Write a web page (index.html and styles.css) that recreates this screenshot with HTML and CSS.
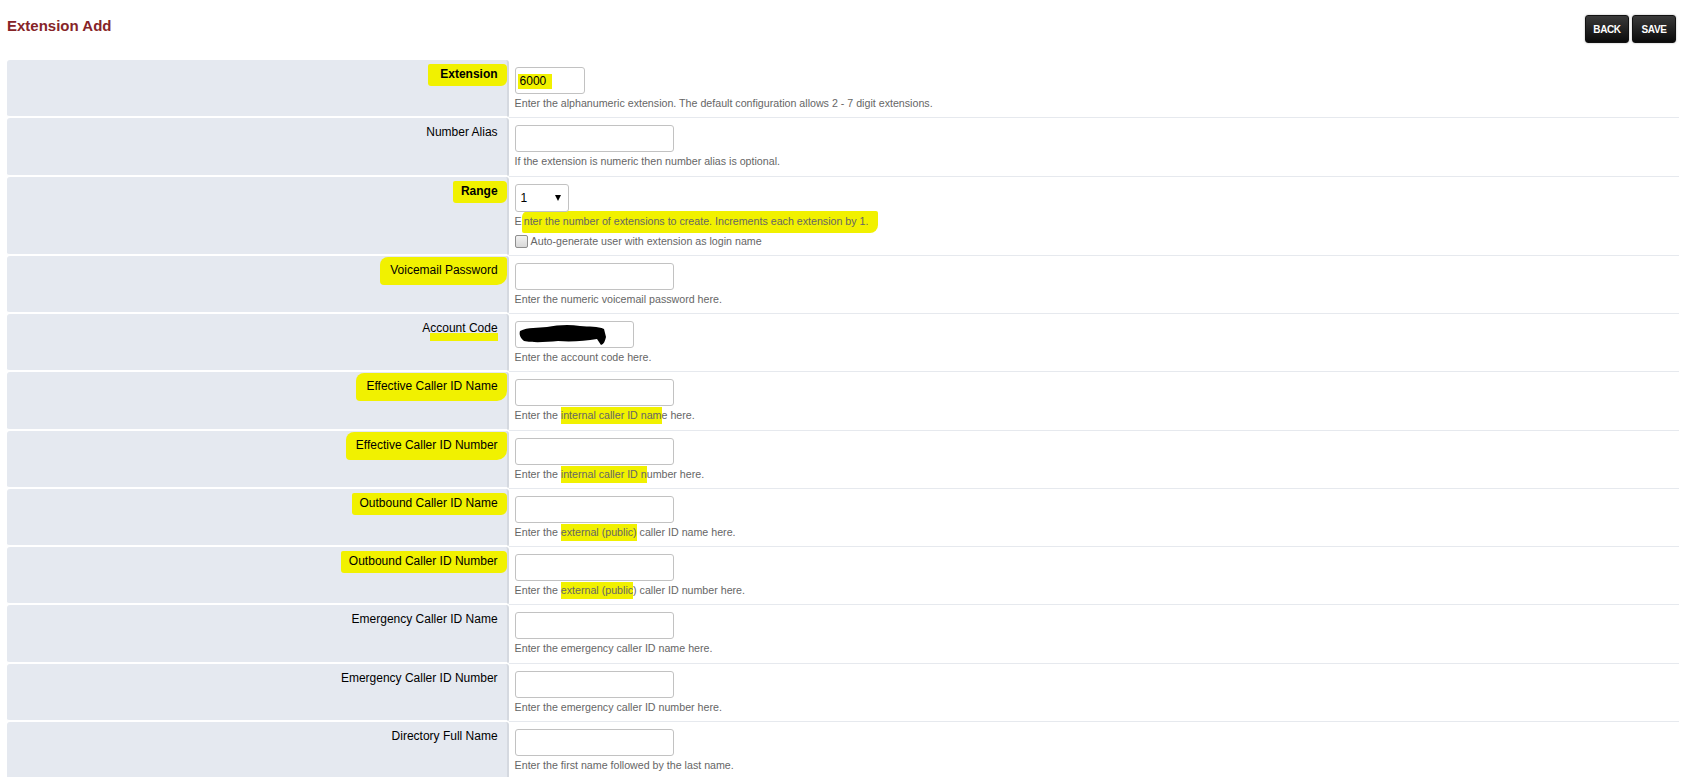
FILE: index.html
```html
<!DOCTYPE html>
<html lang="en">
<head>
    <meta charset="UTF-8">
    <meta name="viewport" content="width=device-width, initial-scale=1.0">
    <title>Extension Add</title>
    <link rel="stylesheet" href="styles.css">
</head>
<body>
    <div class="page">
        <div class="page-header">
            <h1 class="page-title">Extension Add</h1>
            <div class="actions">
                <button type="button" class="btn">BACK</button>
                <button type="submit" class="btn">SAVE</button>
            </div>
        </div>

        <form class="form-table">
            <div class="form-row">
                <div class="cell-label required"><span class="hl hl-label hl-ext">Extension</span></div>
                <div class="cell-value">
                    <input type="text" class="field field-short field-marked" value="6000">
                    <div class="description">Enter the alphanumeric extension. The default configuration allows 2 - 7 digit extensions.</div>
                </div>
            </div>
            <div class="form-row">
                <div class="cell-label">Number Alias</div>
                <div class="cell-value">
                    <input type="text" class="field">
                    <div class="description">If the extension is numeric then number alias is optional.</div>
                </div>
            </div>
            <div class="form-row">
                <div class="cell-label required"><span class="hl hl-label">Range</span></div>
                <div class="cell-value">
                    <div class="select-wrap">
                        <select class="field field-select">
                            <option>1</option>
                            <option>2</option>
                            <option>3</option>
                        </select>
                    </div>
                    <div class="description range-desc">E<span class="hl hl-stroke">nter the number of extensions to create. Increments each extension by 1.</span></div>
                    <div class="checkbox-line">
                        <input type="checkbox" id="autoUser">
                        <label for="autoUser">Auto-generate user with extension as login name</label>
                    </div>
                </div>
            </div>
            <div class="form-row">
                <div class="cell-label"><span class="hl hl-label hl-big">Voicemail Password</span></div>
                <div class="cell-value">
                    <input type="password" class="field">
                    <div class="description">Enter the numeric voicemail password here.</div>
                </div>
            </div>
            <div class="form-row">
                <div class="cell-label">A<span class="hl-under">ccount Code</span></div>
                <div class="cell-value">
                    <div class="redacted">
                        <input type="text" class="field field-medium">
                        <svg class="scribble" viewBox="0 0 90 22" aria-hidden="true">
                            <path d="M1 7 C9 3 19 4 28 3 C38 1 50 0 61 2 C70 3 79 2 85 5 L87 13 C86 17 85 20 82 21 L78 15 C66 17 52 18 39 17 C27 18 15 19 5 17 C1 14 0 10 1 7 Z" fill="#000"/>
                        </svg>
                    </div>
                    <div class="description">Enter the account code here.</div>
                </div>
            </div>
            <div class="form-row">
                <div class="cell-label"><span class="hl hl-label hl-big">Effective Caller ID Name</span></div>
                <div class="cell-value">
                    <input type="text" class="field">
                    <div class="description">Enter the <span class="hl">internal caller ID nam</span>e here.</div>
                </div>
            </div>
            <div class="form-row">
                <div class="cell-label"><span class="hl hl-label hl-big">Effective Caller ID Number</span></div>
                <div class="cell-value">
                    <input type="text" class="field">
                    <div class="description">Enter the <span class="hl">internal caller ID n</span>umber here.</div>
                </div>
            </div>
            <div class="form-row">
                <div class="cell-label"><span class="hl hl-label">Outbound Caller ID Name</span></div>
                <div class="cell-value">
                    <input type="text" class="field">
                    <div class="description">Enter the <span class="hl">external (public)</span> caller ID name here.</div>
                </div>
            </div>
            <div class="form-row">
                <div class="cell-label"><span class="hl hl-label">Outbound Caller ID Number</span></div>
                <div class="cell-value">
                    <input type="text" class="field">
                    <div class="description">Enter the <span class="hl">external (public</span>) caller ID number here.</div>
                </div>
            </div>
            <div class="form-row">
                <div class="cell-label">Emergency Caller ID Name</div>
                <div class="cell-value">
                    <input type="text" class="field">
                    <div class="description">Enter the emergency caller ID name here.</div>
                </div>
            </div>
            <div class="form-row">
                <div class="cell-label">Emergency Caller ID Number</div>
                <div class="cell-value">
                    <input type="text" class="field">
                    <div class="description">Enter the emergency caller ID number here.</div>
                </div>
            </div>
            <div class="form-row">
                <div class="cell-label">Directory Full Name</div>
                <div class="cell-value">
                    <input type="text" class="field">
                    <div class="description">Enter the first name followed by the last name.</div>
                </div>
            </div>
        </form>
    </div>
</body>
</html>
```

FILE: styles.css
```css
body {
    margin: 0;
    font-family: "Liberation Sans", Arial, sans-serif;
    background-color: #fff;
    color: #000;
}
.page {
    padding: 0 14px 0 7px;
}
.page-header {
    display: flex;
    justify-content: space-between;
    align-items: flex-start;
    height: 60px;
    padding-top: 15px;
    box-sizing: border-box;
}
.page-title {
    margin: 2px 0 0 0;
    font-size: 15px;
    line-height: 17px;
    font-weight: bold;
    color: #862428;
}
.actions {
    display: flex;
    gap: 3px;
    margin-right: 3px;
}
.btn {
    width: 44px;
    height: 28px;
    padding: 0;
    border: 1px solid #111;
    border-radius: 3px;
    background: linear-gradient(#3a3a3a, #0a0a0a);
    box-shadow: 0 0 2px rgba(0, 0, 0, 0.35);
    color: #fff;
    font-family: "Liberation Sans", Arial, sans-serif;
    font-size: 10px;
    font-weight: bold;
    letter-spacing: -0.4px;
    cursor: pointer;
}
.btn:hover {
    background: linear-gradient(#555, #222);
}

/* form table */
.form-row {
    display: grid;
    grid-template-columns: 30% 70%;
}
.cell-label {
    background-color: #e5e9f0;
    border-right: 2px solid #d5d9e0;
    border-bottom: 2px solid #fff;
    border-radius: 3px;
    padding: 7px 9px 0 8px;
    text-align: right;
    font-size: 12px;
    line-height: 15px;
}
.cell-label.required {
    font-weight: bold;
}
.cell-value {
    padding: 7px 8px 6.25px 6px;
    border-bottom: 1px solid #e6e9ee;
}
.field {
    display: block;
    width: 159px;
    height: 27px;
    box-sizing: border-box;
    padding: 0 4px;
    border: 1px solid #c2c2c2;
    border-radius: 3px;
    font-family: "Liberation Sans", Arial, sans-serif;
    font-size: 12px;
    color: #000;
    background-color: #fff;
}
.field-short {
    width: 70px;
}
.field-medium {
    width: 119px;
}
.field-marked {
    background-image: linear-gradient(#f1f100, #f1f100);
    background-size: 34px 15px;
    background-position: 2px 6px;
    background-repeat: no-repeat;
}
.select-wrap {
    position: relative;
    width: 54px;
}
.select-wrap::after {
    content: '';
    position: absolute;
    top: 11px;
    right: 8px;
    border-left: 3.5px solid transparent;
    border-right: 3.5px solid transparent;
    border-top: 6px solid #000;
    pointer-events: none;
}
.field-select {
    width: 54px;
    height: 28px;
    padding-left: 5px;
    appearance: none;
    -webkit-appearance: none;
}
.description {
    margin-top: 2px;
    font-size: 10.667px;
    line-height: 15px;
    color: #666;
}
.checkbox-line {
    display: flex;
    align-items: center;
    margin-top: 5px;
    height: 15px;
    font-size: 10.667px;
    color: #666;
}
.checkbox-line input[type="checkbox"] {
    appearance: none;
    -webkit-appearance: none;
    width: 13px;
    height: 13px;
    margin: 0 3px 0 0;
    border: 1px solid #8e8e8e;
    border-radius: 2px;
    background: linear-gradient(#f2f2f2, #d8d8d8);
}

/* the highlighter marks on the screenshot */
.hl {
    background-color: #f1f100;
    padding: 2px 0 3px;
}
.hl-label {
    padding: 3px 9px 5px 8px;
    margin-right: -9px;
    border-radius: 2px 4px 6px 3px;
}
.hl-ext {
    padding-left: 12px;
}
.hl-big {
    padding: 6px 9px 8px 10px;
    border-radius: 8px 3px 10px 4px;
}
.hl-stroke {
    padding: 4px 10px 6px 2px;
    border-radius: 6px 2px 8px 2px;
}
.hl-under {
    background: linear-gradient(transparent 58%, #f1f100 58%);
    padding-bottom: 6px;
}
.redacted {
    position: relative;
    width: 119px;
}
.scribble {
    position: absolute;
    left: 4px;
    top: 3px;
    width: 90px;
    height: 22px;
}
```
